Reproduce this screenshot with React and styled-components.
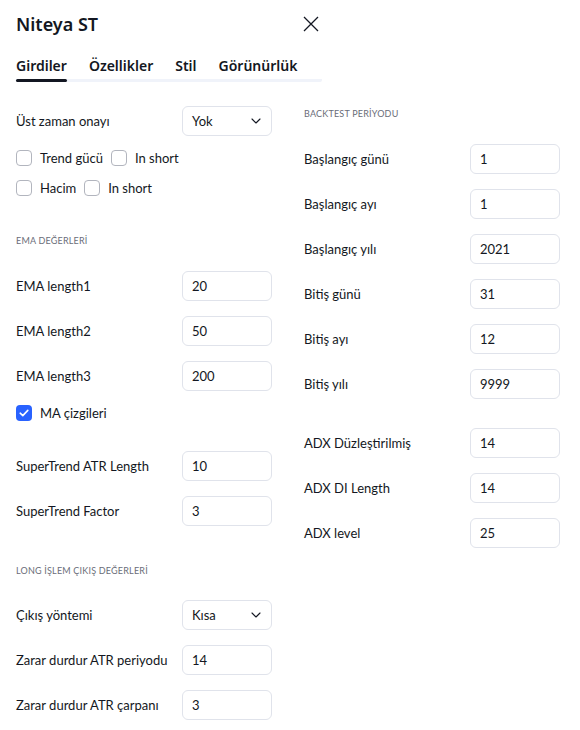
import React from "react";
import styled, { createGlobalStyle } from "styled-components";

const GlobalStyle = createGlobalStyle`
  body {
    margin: 0;
    background: #ffffff;
    font-family: Lato, "Noto Sans", sans-serif;
    color: #131722;
  }
`;

// Styled Components
const Dialog = styled.div`
  width: 580px;
  height: 730px;
  background: #ffffff;
  box-sizing: border-box;
  overflow: hidden;
`;

const Header = styled.div`
  display: flex;
  align-items: center;
  height: 48px;
  padding: 0 0 0 16px;
`;

const Title = styled.h1`
  margin: 0;
  font-family: "Noto Sans", sans-serif;
  font-size: 18px;
  font-weight: 600;
  color: #131722;
  width: 286px;
`;

const CloseButton = styled.button`
  border: none;
  background: none;
  padding: 0;
  width: 18px;
  height: 18px;
  display: flex;
  align-items: center;
  justify-content: center;
  color: #131722;
  cursor: pointer;
`;

const Tabs = styled.div`
  display: flex;
  gap: 22px;
  margin: 8px 0 0 16px;
  width: 306px;
  height: 23px;
  border-bottom: 3px solid #f0f3fa;
  border-radius: 0 0 2px 2px;
`;

const Tab = styled.div`
  position: relative;
  font-family: "Noto Sans", sans-serif;
  font-size: 14px;
  font-weight: 600;
  color: #131722;
  line-height: 20px;
  height: 23px;

  &::after {
    content: "";
    display: ${(props) => (props.active ? "block" : "none")};
    position: absolute;
    left: 0;
    right: 0;
    bottom: -3px;
    height: 3px;
    border-radius: 2px;
    background: #131722;
  }
`;

const Body = styled.div`
  display: grid;
  grid-template-columns: 256px 256px;
  column-gap: 32px;
  padding: 0 20px 0 16px;
  margin-top: 24px;
`;

const Column = styled.div`
  display: flex;
  flex-direction: column;
`;

const Row = styled.div`
  display: flex;
  align-items: center;
  justify-content: space-between;
  height: 30px;
  margin-top: ${(props) => props.mt ?? 15}px;
  font-size: 13px;
`;

const Label = styled.span`
  color: #131722;
`;

const Field = styled.div`
  width: ${(props) => props.w || 90}px;
  height: 30px;
  box-sizing: border-box;
  border: 1px solid #e0e3eb;
  border-radius: 6px;
  display: flex;
  align-items: center;
  justify-content: space-between;
  padding: 0 10px 0 9px;
  font-size: 13px;
  color: #131722;
`;

const SectionTitle = styled.div`
  height: 16px;
  line-height: 16px;
  margin-top: ${(props) => props.mt ?? 0}px;
  font-size: 9px;
  color: #6a6d78;
  text-transform: uppercase;
  letter-spacing: 0.2px;
`;

const CheckRow = styled.div`
  display: flex;
  align-items: center;
  gap: 8px;
  height: 30px;
  margin-top: ${(props) => props.mt ?? 0}px;
  font-size: 13px;
`;

const CheckItem = styled.label`
  display: flex;
  align-items: center;
  gap: 8px;
`;

const Box = styled.span`
  width: 16px;
  height: 16px;
  box-sizing: border-box;
  border-radius: 4px;
  border: ${(props) => (props.checked ? "none" : "1px solid #b2b5be")};
  background: ${(props) => (props.checked ? "#2962ff" : "#ffffff")};
  display: flex;
  align-items: center;
  justify-content: center;
`;

const Chevron = () => (
  <svg width="10" height="6" viewBox="0 0 10 6" fill="none">
    <path d="M1 1l4 4 4-4" stroke="#131722" strokeWidth="1.1" strokeLinecap="round" strokeLinejoin="round" />
  </svg>
);

const Checkbox = ({ checked, children }) => (
  <CheckItem>
    <Box checked={checked}>
      {checked && (
        <svg width="10" height="8" viewBox="0 0 10 8" fill="none">
          <path d="M1.2 4.2l2.6 2.4L8.8 1.4" stroke="#ffffff" strokeWidth="1.6" strokeLinecap="round" strokeLinejoin="round" />
        </svg>
      )}
    </Box>
    <span>{children}</span>
  </CheckItem>
);

const InputRow = ({ label, value, mt, select }) => (
  <Row mt={mt}>
    <Label>{label}</Label>
    <Field>
      <span>{value}</span>
      {select && <Chevron />}
    </Field>
  </Row>
);

const App = () => (
  <Dialog>
    <GlobalStyle />
    <Header>
      <Title>Niteya ST</Title>
      <CloseButton>
        <svg width="16" height="16" viewBox="0 0 16 16" fill="none">
          <path d="M1 1l14 14M15 1L1 15" stroke="#131722" strokeWidth="1.3" />
        </svg>
      </CloseButton>
    </Header>
    <Tabs>
      <Tab active>Girdiler</Tab>
      <Tab>Özellikler</Tab>
      <Tab>Stil</Tab>
      <Tab>Görünürlük</Tab>
    </Tabs>
    <Body>
      <Column>
        <InputRow label="Üst zaman onayı" value="Yok" mt={0} select />
        <CheckRow mt={7}>
          <Checkbox>Trend gücü</Checkbox>
          <Checkbox>In short</Checkbox>
        </CheckRow>
        <CheckRow>
          <Checkbox>Hacim</Checkbox>
          <Checkbox>In short</Checkbox>
        </CheckRow>
        <SectionTitle mt={30}>EMA DEĞERLERİ</SectionTitle>
        <InputRow label="EMA length1" value="20" mt={22} />
        <InputRow label="EMA length2" value="50" />
        <InputRow label="EMA length3" value="200" />
        <CheckRow mt={7}>
          <Checkbox checked>MA çizgileri</Checkbox>
        </CheckRow>
        <InputRow label="SuperTrend ATR Length" value="10" mt={23} />
        <InputRow label="SuperTrend Factor" value="3" />
        <SectionTitle mt={37}>LONG İŞLEM ÇIKIŞ DEĞERLERİ</SectionTitle>
        <InputRow label="Çıkış yöntemi" value="Kısa" mt={21} select />
        <InputRow label="Zarar durdur ATR periyodu" value="14" />
        <InputRow label="Zarar durdur ATR çarpanı" value="3" />
      </Column>
      <Column>
        <SectionTitle>BACKTEST PERİYODU</SectionTitle>
        <InputRow label="Başlangıç günü" value="1" mt={22} />
        <InputRow label="Başlangıç ayı" value="1" />
        <InputRow label="Başlangıç yılı" value="2021" />
        <InputRow label="Bitiş günü" value="31" />
        <InputRow label="Bitiş ayı" value="12" />
        <InputRow label="Bitiş yılı" value="9999" />
        <InputRow label="ADX Düzleştirilmiş" value="14" mt={29} />
        <InputRow label="ADX DI Length" value="14" />
        <InputRow label="ADX level" value="25" />
      </Column>
    </Body>
  </Dialog>
);

export default App;
